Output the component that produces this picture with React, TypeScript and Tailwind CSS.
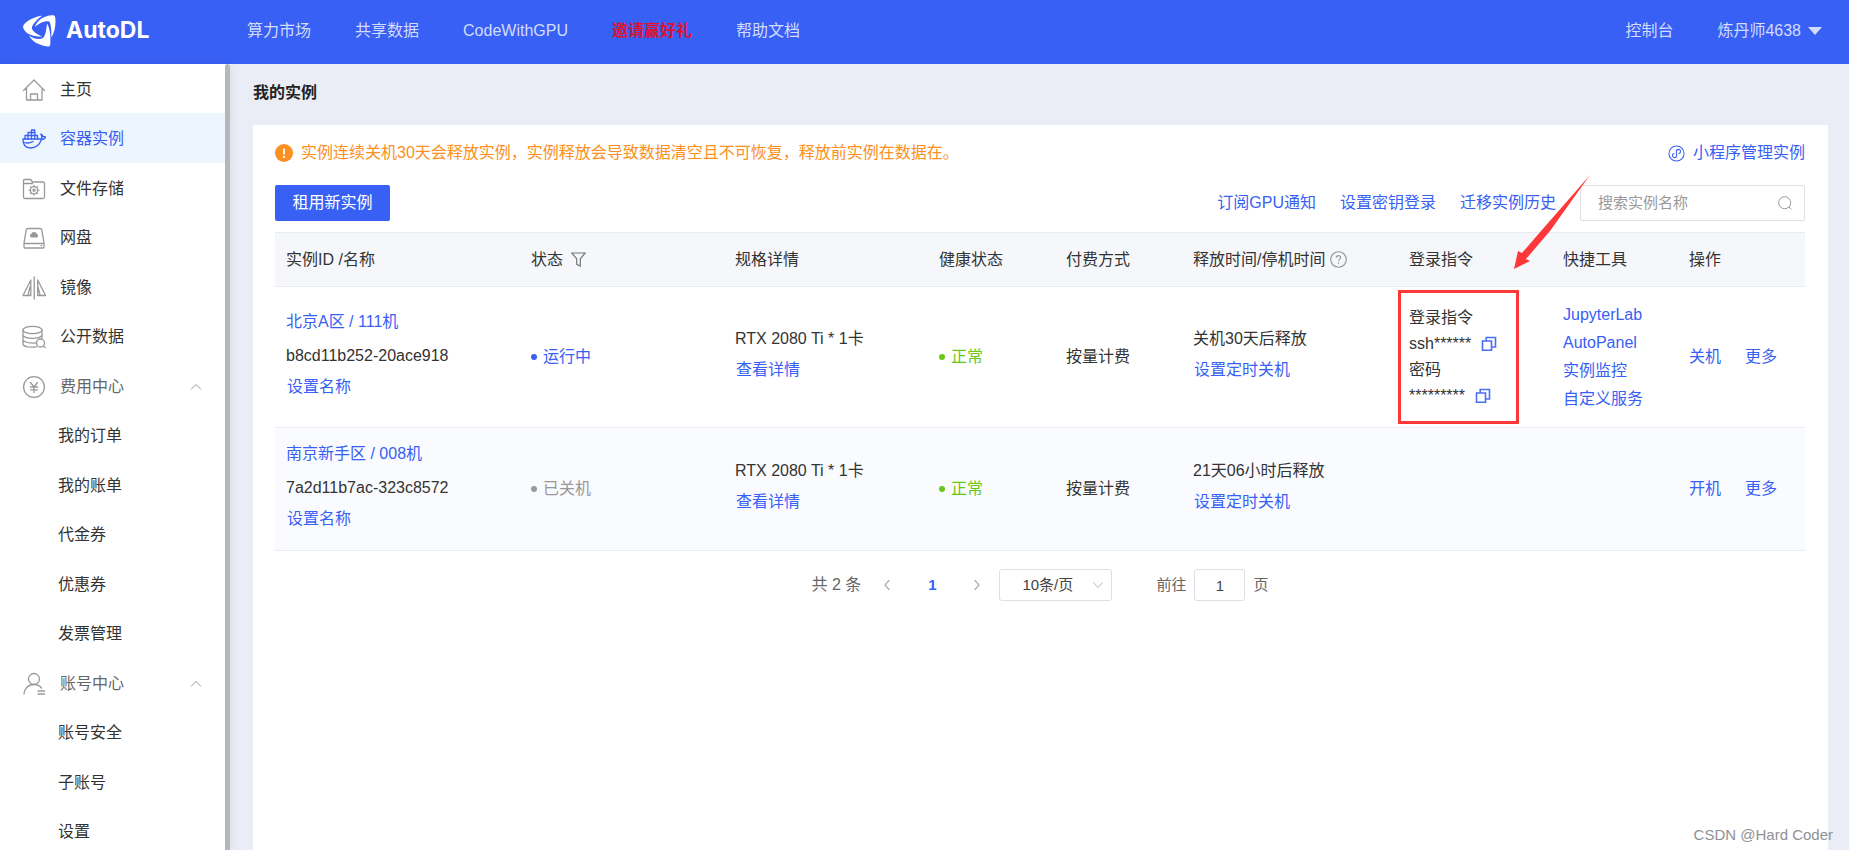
import type { ReactNode } from 'react'

type MenuItem = { label: string; icon?: ReactNode; group?: boolean; active?: boolean }

const line = {
  viewBox: '0 0 24 24',
  width: 24,
  height: 24,
  fill: 'none',
  stroke: 'currentColor',
  strokeWidth: 1.3,
  strokeLinecap: 'round' as const,
  strokeLinejoin: 'round' as const,
}

const HomeIcon = () => (
  <svg {...line}>
    <path d="M1.5 12.5 12 2l10.5 10.5M4.5 10v12H20V10M8.5 22v-6h7v6" />
  </svg>
)

const DockerIcon = () => (
  <svg {...line}>
    <path d="M1 12h17.5c1 0 1.500-1 1.200-2.500-.2-1.300-1-1.500-.7-2.500 1.500.5 1.800 1.500 2 2.500 1 0 2 0 2.500.5-.5 1.500-2 2.500-4 2.500C17.5 18 14 21 8.500 21 3.500 21 .7 18 1 12Z" />
    <path d="M3 12V8.500h12.500V12M6 8.500v-3h7v3M6 8.500V12M9.500 5.500V12M12.800 8.500V12M9.500 5.500V3h3.200v2.500" />
    <path d="M2 15.500c3.500 1 6.500.5 9-1" />
  </svg>
)

const FolderIcon = () => (
  <svg {...line}>
    <path d="M1.500 20V3.500c0-.6.4-1 1-1h6.200L10.500 5H21c.8 0 1.500.7 1.500 1.500V20c0 .8-.7 1.500-1.500 1.500H3c-.8 0-1.500-.7-1.500-1.500ZM1.500 6.500h9" />
    <circle cx="12" cy="13.200" r="3.600" />
    <circle cx="12" cy="13.200" r="1" fill="currentColor" />
    <path d="M12 8.300v1M12 17.100v1M7.100 13.200h1M15.900 13.200h1M8.600 9.800l.6.6M14.800 16l.6.6M8.600 16.600l.6-.6M14.800 10.400l.6-.6" />
  </svg>
)

const DiskIcon = () => (
  <svg {...line}>
    <path d="M2 17 4.200 3.800c.2-.8.8-1.300 1.600-1.300h12.400c.8 0 1.400.5 1.600 1.300L22 17v4c0 .6-.4 1-1 1H3c-.6 0-1-.4-1-1v-4ZM2 17.500h20M19 19.700h.5" />
    <path d="M9 11.500a2 2 0 0 1 0-3.500 3.200 3.200 0 0 1 6 0 2 2 0 0 1 0 3.500Z" fill="currentColor" stroke="none" />
  </svg>
)

const MirrorIcon = () => (
  <svg {...line}>
    <path d="M12.200 1v22M8.800 4v15.500H1ZM15.700 4v15.500h7.800ZM6 19l2-8M18 19l-2-8" />
  </svg>
)

const DatabaseIcon = () => (
  <svg {...line}>
    <ellipse cx="10.500" cy="5" rx="9.500" ry="3.700" />
    <path d="M1 5v14c0 1.800 4 3.200 9.500 3.200 1.500 0 2.800-.1 4-.3M20 5v8M1 9.700c0 2 4 3.700 9.500 3.700S20 11.700 20 9.700M1 14.400c0 2 4 3.700 9.500 3.700 1 0 2 0 3-.2" />
    <circle cx="18.500" cy="18" r="4" />
    <path d="m21.500 21 1.500 1.500" />
  </svg>
)

const FeeIcon = () => (
  <svg {...line}>
    <circle cx="12" cy="12" r="10.400" />
    <path d="m8.500 7.500 3.500 4.500 3.500-4.500M12 12v5.500M8.500 12h7M8.500 14.800h7" />
  </svg>
)

const AccountIcon = () => (
  <svg {...line}>
    <circle cx="12" cy="7" r="5.500" />
    <path d="M2 22c.3-5.200 4-9.500 10-9.500 3.200 0 5.700 1.300 7.500 3.500M16 19h6.500M16 22h6.500" />
  </svg>
)

const CopyIcon = () => (
  <svg viewBox="0 0 16 16" width="16" height="16" fill="none" stroke="#4a6ff5" strokeWidth="1.6">
    <path d="M1.500 5h9v9.300h-9ZM5.200 4.800V1.500h9.300V11h-3.700" />
  </svg>
)

const HelpIcon = () => (
  <svg viewBox="0 0 16 16" width="17" height="17" fill="none" stroke="#999" strokeWidth="1.1">
    <circle cx="8" cy="8" r="7.300" />
    <path d="M6 6.300C6 5 7 4.300 8 4.300s2 .7 2 1.900C10 7.500 8 7.800 8 9.400M8 10.700v1.200" />
  </svg>
)

const menu: MenuItem[] = [
  { label: '主页', icon: <HomeIcon /> },
  { label: '容器实例', icon: <DockerIcon />, active: true },
  { label: '文件存储', icon: <FolderIcon /> },
  { label: '网盘', icon: <DiskIcon /> },
  { label: '镜像', icon: <MirrorIcon /> },
  { label: '公开数据', icon: <DatabaseIcon /> },
  { label: '费用中心', icon: <FeeIcon />, group: true },
  { label: '我的订单' },
  { label: '我的账单' },
  { label: '代金券' },
  { label: '优惠券' },
  { label: '发票管理' },
  { label: '账号中心', icon: <AccountIcon />, group: true },
  { label: '账号安全' },
  { label: '子账号' },
  { label: '设置' },
]

const instances = [
  {
    id: 'b8cd11b252-20ace918',
    region: '北京A区 / 111机',
    running: true,
    release: '关机30天后释放',
  },
  {
    id: '7a2d11b7ac-323c8572',
    region: '南京新手区 / 008机',
    running: false,
    release: '21天06小时后释放',
  },
]

const tools = ['JupyterLab', 'AutoPanel', '实例监控', '自定义服务']

function Link({ children, className = '' }: { children: ReactNode; className?: string }) {
  return (
    <a href="#" className={`text-[#3860f4] ${className}`}>
      {children}
    </a>
  )
}

function Header() {
  return (
    <header className="h-16 shrink-0 flex items-center justify-between bg-[#3860f4] pl-[23px] pr-[27px] pb-[3px] text-[#d2dcfd]">
      <div className="flex items-center">
        <a href="#" className="flex w-[224px] items-center gap-[10px] text-white">
          <svg viewBox="0 0 100 98" width="33" height="32" fill="currentColor">
            <path d="M58 2C38 3 12 17 3 28c-5 6-4 12 1 19 10 13 26 20 54 19C42 59 31 51 27 43 24 34 38 16 58 2Z" />
            <path d="M36 36C42 16 68 0 90 1c8 0 9 6 9 18 0 20-4 36-13 50 1-18 0-34-4-46-4-8-24-4-46 13Z" />
            <path d="M18 62c12 11 27 13 40 10 9-3 13-25 15-46 9 14 12 38 10 64-1 6-6 8-12 6C46 91 27 82 18 62Z" />
          </svg>
          <span className="font-[Inter,sans-serif] text-[23px] font-bold">AutoDL</span>
        </a>
        <nav className="flex gap-[44px]">
          <a href="#">算力市场</a>
          <a href="#">共享数据</a>
          <a href="#">CodeWithGPU</a>
          <a href="#" className="font-bold text-[#e0102f]">邀请赢好礼</a>
          <a href="#">帮助文档</a>
        </nav>
      </div>
      <div className="flex items-center gap-[44px]">
        <a href="#">控制台</a>
        <button className="flex items-center gap-[7px]">
          炼丹师4638
          <svg viewBox="0 0 14 8" width="14" height="8" fill="currentColor">
            <path d="M0 0h14L7 8Z" />
          </svg>
        </button>
      </div>
    </header>
  )
}

function Sidebar() {
  return (
    <aside className="flex w-[230px] shrink-0 overflow-hidden bg-white shadow-[2px_0_8px_rgba(0,0,0,0.06)]">
      <ul className="flex-1">
        {menu.map(({ label, icon, group, active }) => (
          <li key={label} className="odd:h-[49px] even:h-[50px]">
            <a
              href="#"
              className={`flex h-full items-center pt-0.5 ${icon ? 'pl-[22px]' : 'pl-[58px]'} ${
                active ? 'bg-[#edf5ff] text-[#3860f4]' : group ? 'text-[#666]' : 'text-[#333]'
              }`}
            >
              {icon && <span className={`mr-[14px] ${active ? '' : 'text-[#999]'}`}>{icon}</span>}
              {label}
              {group && (
                <svg viewBox="0 0 12 8" width="12" height="8" fill="none" stroke="#999" className="ml-auto mr-[23px]">
                  <path d="m1 6.500 5-5 5 5" />
                </svg>
              )}
            </a>
          </li>
        ))}
      </ul>
      <div className="w-[5px] rounded-t-sm bg-[#b5b8b9]" />
    </aside>
  )
}

function InstanceTable() {
  return (
    <table className="mt-[11px] w-full table-fixed border-t border-[#e8ebf3] text-left">
      <colgroup>
        <col className="w-[245px]" />
        <col className="w-[204px]" />
        <col className="w-[204px]" />
        <col className="w-[127px]" />
        <col className="w-[127px]" />
        <col className="w-[216px]" />
        <col className="w-[154px]" />
        <col className="w-[126px]" />
        <col className="w-[127px]" />
      </colgroup>
      <thead>
        <tr className="h-[54px] border-b border-[#e8ebf3] bg-[#f5f7fb] *:px-[11px] *:font-normal">
          <th>实例ID /名称</th>
          <th>
            <span className="flex items-center gap-2">
              状态
              <svg viewBox="0 0 15 15" width="15" height="15" fill="none" stroke="#777" strokeWidth="1.2">
                <path d="M.8 1h13.400L9.300 6.800V14L5.700 12.300V6.800Z" />
              </svg>
            </span>
          </th>
          <th>规格详情</th>
          <th>健康状态</th>
          <th>付费方式</th>
          <th>
            <span className="flex items-center gap-[5px] whitespace-nowrap">
              释放时间/停机时间 <HelpIcon />
            </span>
          </th>
          <th className="relative">
            登录指令
            {/* callout arrow */}
            <svg viewBox="0 0 78 96" width="78" height="96" fill="#fd3838" className="absolute bottom-[16px] left-[115px]">
              <path d="M1 95 5 77l4 2 19-22L77 1 37 57 13 85l4 2Z" />
            </svg>
          </th>
          <th>快捷工具</th>
          <th>操作</th>
        </tr>
      </thead>
      <tbody>
        {instances.map(({ id, region, running, release }) => (
          <tr
            key={id}
            className="h-[123px] border-b border-[#e8ebf3] *:px-[11px] first:h-[141px] even:bg-[#fafbfe]"
          >
            <td>
              <div className="pb-2">
                <Link className="block leading-[38px]">{region}</Link>
                <p className="leading-[30px]">{id}</p>
                <Link className="ml-px block leading-[32px]">设置名称</Link>
              </div>
            </td>
            <td>
              <span className={`flex items-center gap-[6px] ${running ? 'text-[#3860f4]' : 'text-[#999]'}`}>
                <i className="size-[6px] rounded-full bg-current" />
                {running ? '运行中' : '已关机'}
              </span>
            </td>
            <td>
              <div className="pb-[7px] leading-[31px]">
                <p>RTX 2080 Ti * 1卡</p>
                <Link className="ml-px">查看详情</Link>
              </div>
            </td>
            <td>
              <span className="flex items-center gap-[6px] text-[#67c816]">
                <i className="size-[6px] rounded-full bg-current" />
                正常
              </span>
            </td>
            <td>按量计费</td>
            <td>
              <div className="pb-[7px] leading-[31px]">
                <p>{release}</p>
                <Link className="ml-px">设置定时关机</Link>
              </div>
            </td>
            <td className="relative">
              {running && (
                <>
                  <div className="leading-[26px]">
                    <p>登录指令</p>
                    <p className="flex items-center gap-[10px]">
                      ssh****** <button aria-label="复制登录指令"><CopyIcon /></button>
                    </p>
                    <p>密码</p>
                    <p className="flex items-center gap-[10px]">
                      ********* <button aria-label="复制密码"><CopyIcon /></button>
                    </p>
                  </div>
                  <div className="absolute left-0 top-[3px] h-[134px] w-[121px] border-3 border-[#fd3838]" />
                </>
              )}
            </td>
            <td>
              {running && (
                <div className="leading-[28px]">
                  {tools.map((tool) => (
                    <Link key={tool} className="block">{tool}</Link>
                  ))}
                </div>
              )}
            </td>
            <td>
              <div className="flex gap-6 whitespace-nowrap text-[#3860f4]">
                <button>{running ? '关机' : '开机'}</button>
                <button>更多</button>
              </div>
            </td>
          </tr>
        ))}
      </tbody>
    </table>
  )
}

function Pagination() {
  return (
    <div className="mt-[18px] flex items-center justify-center text-[15px] text-[#666]">
      <span className="text-base">共 2 条</span>
      <button aria-label="上一页" className="ml-[22px]">
        <svg viewBox="0 0 8 12" width="8" height="12" fill="none" stroke="#b5b8c0" strokeWidth="1.5">
          <path d="M6.500 1 2 6l4.500 5" />
        </svg>
      </button>
      <button className="w-[82px] font-bold text-[#3860f4]">1</button>
      <button aria-label="下一页">
        <svg viewBox="0 0 8 12" width="8" height="12" fill="none" stroke="#b5b8c0" strokeWidth="1.5">
          <path d="M1.500 1 6 6l-4.500 5" />
        </svg>
      </button>
      <div className="relative ml-[18px]">
        <select
          aria-label="每页条数"
          className="h-8 w-[113px] appearance-none rounded-[3px] border border-[#dcdfe6] bg-white pl-[22px] text-[#444]"
        >
          <option>10条/页</option>
        </select>
        <svg viewBox="0 0 10 8" width="10" height="8" fill="none" stroke="#b5b8c0" className="pointer-events-none absolute right-[9px] top-3">
          <path d="m.5 1.500 4.500 5 4.500-5" />
        </svg>
      </div>
      <label className="ml-[44px] flex items-center gap-2">
        前往
        <input defaultValue="1" className="h-8 w-[51px] rounded-[3px] border border-[#dcdfe6] text-center text-[#444]" />
        页
      </label>
    </div>
  )
}

export default function App() {
  return (
    <div className="relative flex h-screen flex-col overflow-hidden bg-[#eaedf6] font-['Liberation_Sans','Noto_Sans_CJK_SC',sans-serif] text-base text-[#333]">
      <Header />
      <div className="flex min-h-0 flex-1">
        <Sidebar />
        <main className="flex min-w-0 flex-1 flex-col pl-[23px] pr-[21px]">
          <h1 className="pt-[13px] pb-[17px] font-bold leading-[31px] text-[#222]">我的实例</h1>
          <section className="flex-1 bg-white pl-[22px] pr-[23px] pt-4">
            <div className="flex items-center justify-between">
              <p className="flex items-center gap-2 text-[#fb9020]">
                <svg viewBox="0 0 18 18" width="18" height="18">
                  <circle cx="9" cy="9" r="9" fill="#fb9020" />
                  <path d="M9 4.500v6M9 12v2" stroke="#fff" strokeWidth="1.8" />
                </svg>
                实例连续关机30天会释放实例，实例释放会导致数据清空且不可恢复，释放前实例在数据在。
              </p>
              <Link className="flex items-center gap-2">
                <svg viewBox="0 0 18 18" width="17" height="17" fill="none" stroke="currentColor" strokeWidth="1.1">
                  <circle cx="9" cy="9" r="8" />
                  <path
                    d="M6.800 8.500a2.200 2.200 0 1 0 1.900 2.600l.6-4.200a2.200 2.200 0 1 1 1.900 2.600"
                    transform="rotate(-12 9 9)"
                  />
                </svg>
                小程序管理实例
              </Link>
            </div>
            <div className="mt-5 flex items-center justify-between">
              <button className="h-9 w-[115px] rounded-xs bg-[#3860f4] text-white">租用新实例</button>
              <div className="flex items-center gap-6">
                <Link>订阅GPU通知</Link>
                <Link>设置密钥登录</Link>
                <Link>迁移实例历史</Link>
                <div className="flex h-9 w-[225px] items-center justify-between rounded-xs border border-[#dcdfe6] pl-[17px] pr-[12px]">
                  <input
                    aria-label="搜索实例名称"
                    placeholder="搜索实例名称"
                    className="min-w-0 flex-1 text-[15px] outline-none placeholder:text-[#999]"
                  />
                  <svg viewBox="0 0 14 14" width="14" height="14" fill="none" stroke="#999">
                    <circle cx="6.700" cy="6.700" r="6" />
                    <path d="m11 11 2.300 2.300" />
                  </svg>
                </div>
              </div>
            </div>
            <InstanceTable />
            <Pagination />
          </section>
        </main>
      </div>
      <p className="absolute bottom-1 right-4 text-[15px] text-[#8f9194]">CSDN @Hard Coder</p>
    </div>
  )
}
